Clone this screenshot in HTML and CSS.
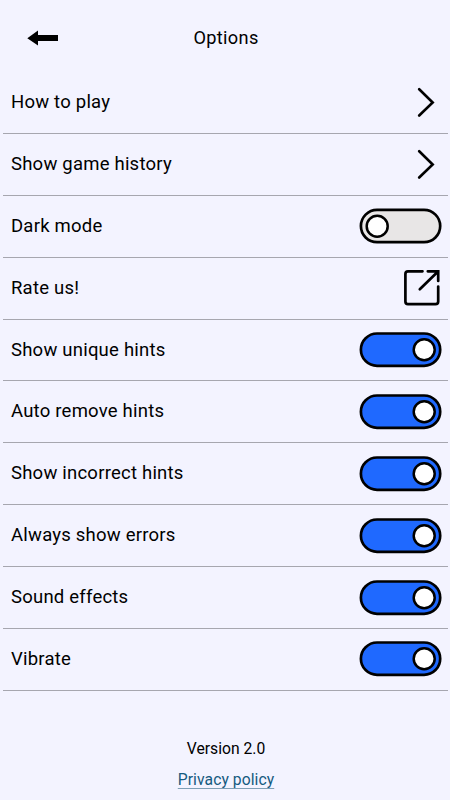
FILE: index.html
```html
<!DOCTYPE html>
<html lang="en">
<head>
<meta charset="utf-8">
<title>Options</title>
<link rel="stylesheet" href="styles.css">
</head>
<body>
<svg class="symbols">
  <symbol id="chevron" viewBox="0 0 18 30"><path d="M2.200 2.200 15.700 15.500 2.200 28.500"/></symbol>
  <symbol id="toggle-off" viewBox="0 0 83 36"><rect class="track" x="1.900" y="1.900" width="79.300" height="32.300" rx="16.150"/><circle class="knob" cx="18.200" cy="18.200" r="10.500"/></symbol>
  <symbol id="toggle-on" viewBox="0 0 83 36"><rect class="track" x="1.900" y="1.500" width="79.300" height="32.300" rx="16.150"/><circle class="knob" cx="65.200" cy="17.700" r="10.500"/></symbol>
</svg>
<header class="header">
  <svg class="back" viewBox="0 0 32 16"><path d="M.300 8.300 11 .500V5H31V11H11V15.500Z"/></svg>
  <h1 class="title">Options</h1>
</header>
<main class="options">
  <div class="row"><span class="label">How to play</span><svg class="chevron"><use href="#chevron"/></svg></div>
  <div class="row"><span class="label">Show game history</span><svg class="chevron"><use href="#chevron"/></svg></div>
  <div class="row"><span class="label">Dark mode</span><svg class="toggle"><use href="#toggle-off"/></svg></div>
  <div class="row"><span class="label">Rate us!</span><svg class="external" viewBox="0 0 38 38"><path d="M18.500 2.300H4Q1.400 2.300 1.400 5V32.500Q1.400 35.200 4 35.200H31.500Q34.200 35.200 34.200 32.500V17.500M15.800 20.300 34 2.500M23.800 2.300H34.200V12"/></svg></div>
  <div class="row"><span class="label">Show unique hints</span><svg class="toggle on"><use href="#toggle-on"/></svg></div>
  <div class="row"><span class="label">Auto remove hints</span><svg class="toggle on"><use href="#toggle-on"/></svg></div>
  <div class="row"><span class="label">Show incorrect hints</span><svg class="toggle on"><use href="#toggle-on"/></svg></div>
  <div class="row"><span class="label">Always show errors</span><svg class="toggle on"><use href="#toggle-on"/></svg></div>
  <div class="row"><span class="label">Sound effects</span><svg class="toggle on"><use href="#toggle-on"/></svg></div>
  <div class="row"><span class="label">Vibrate</span><svg class="toggle on"><use href="#toggle-on"/></svg></div>
</main>
<footer class="footer">
  <span class="version">Version 2.0</span>
  <a class="privacy" href="#">Privacy policy</a>
</footer>
</body>
</html>
```

FILE: styles.css
```css
* { box-sizing: border-box; }
body { margin: 0; height: 800px; overflow: hidden; background: #f3f3ff; color: #000; font-family: Roboto, sans-serif; }
.symbols { display: none; }
.header { height: 72px; display: grid; grid-template-columns: 1fr auto 1fr; align-items: center; padding: 4px 25px 0 27px; }
.back { width: 32px; height: 16px; }
.title { margin: 0 0 2px; font-size: 18.2px; font-weight: 400; letter-spacing: 0.33px; }
.options { padding: 0 2px 0 3px; }
.row { height: 61.9px; display: flex; align-items: center; justify-content: space-between; padding: 0 6px 0 8px; border-bottom: 1px solid #a6a6af; }
.label { margin-bottom: 1px; font-size: 18.5px; letter-spacing: 0.22px; }
.chevron { width: 18px; height: 30px; margin-right: 7px; fill: none; stroke: #000; stroke-width: 2.6; stroke-linecap: round; }
.external { width: 38px; height: 38px; margin-right: 0.5px; fill: none; stroke: #000; stroke-width: 2.7; stroke-linecap: round; }
.toggle { width: 83px; height: 36px; fill: #e8e6e6; stroke: #000; stroke-width: 2.7; }
.on { fill: #1f69ff; }
.knob { fill: #fff; stroke-width: 2.5; }
.footer { display: flex; flex-direction: column; align-items: center; padding: 48px 0 0 2px; gap: 12px; font-size: 15.7px; }
.privacy { letter-spacing: 0.06px; color: #155a80; text-decoration-color: #7f9fb6; text-decoration-thickness: 1px; text-underline-offset: 3px; text-decoration-skip-ink: none; }
```
